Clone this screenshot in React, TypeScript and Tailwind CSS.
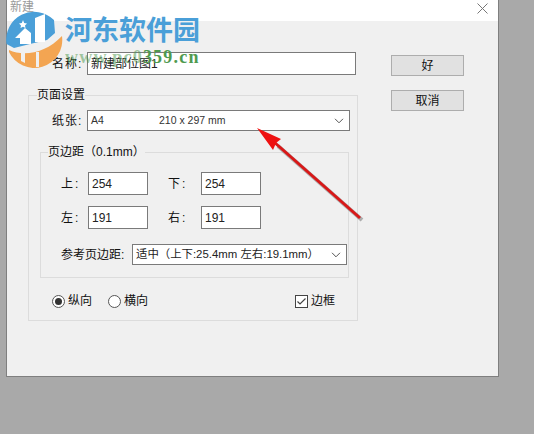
const cjk = "font-['Liberation_Sans','Noto_Sans_CJK_SC',sans-serif]";

function TextBox({ value, className = "" }: { value: string; className?: string }) {
  return (
    <div className={`flex h-[23px] items-center border border-[#7a7a7a] bg-white px-[3px] text-[12px] text-[#222] ${className}`}>
      {value}
    </div>
  );
}

function Chevron() {
  return (
    <svg width="10" height="6" viewBox="0 0 10 6" fill="none" stroke="#555" strokeWidth="1">
      <path d="M1 .8 5 4.8 9 .8" />
    </svg>
  );
}

function MarginField({ label, value, labelWidth }: { label: string; value: string; labelWidth: string }) {
  return (
    <div className="flex items-center">
      <span className={`${labelWidth} text-[12px] tracking-[2px]`}>{label}</span>
      <TextBox value={value} className="w-[60px]" />
    </div>
  );
}

function Logo() {
  return (
    <div className="pointer-events-none absolute left-0 top-0 z-10 flex">
      <svg width="65" height="72" viewBox="0 0 65 72" className="shrink-0">
        {/* blue dome */}
        <path d="M6.500 44A28 28 0 0 1 54 20L55 33 47 40 30 44 14 48Z" fill="#4a9fd8" />
        {/* white star, house and bar */}
        <path d="M23 20 24.200 23 27 23.500 25 25.500 25.500 28 23 26.700 20.500 28 21 25.500 19 23.500 21.800 23Z" fill="#fff" />
        <path d="M15 38 25 28 31 33V44H20V38Z" fill="#fff" />
        <path d="M35 18 45 14V42H35Z" fill="#fff" />
        {/* orange crescent */}
        <path d="M9 50C24 57 46 53 62 36A28 28 0 0 1 9 52Z" fill="#f3a552" />
        <path d="M21 51H25V63L21 61ZM36 52H39V67H36Z" fill="#f0f0f0" />
      </svg>
      <div className="flex flex-col">
        <span className="mt-[13px] text-[27px] leading-[32px] font-bold text-[#4a9fd8] font-['Noto_Sans_CJK_SC',sans-serif]">
          河东软件园
        </span>
        <span className="mt-[3px] text-[18px] leading-[18px] font-bold tracking-[1.2px] whitespace-nowrap text-[#4f9a4f] font-['Liberation_Serif',serif]">
          <span className="opacity-50">www.pc0</span>
          <span>359.cn</span>
        </span>
      </div>
    </div>
  );
}

function Arrow() {
  return (
    <svg className="pointer-events-none absolute left-[250px] top-[120px]" width="120" height="105" viewBox="0 0 120 105">
      <path d="M112 100 28 26" stroke="#777" strokeOpacity=".55" strokeWidth="4" fill="none" />
      <path d="M110 98 24 22" stroke="#d81818" strokeWidth="3" fill="none" />
      <path d="M7 8 31 19 26 23 23 30Z" fill="#ee1111" />
    </svg>
  );
}

export default function App() {
  return (
    <div className={`relative h-[434px] w-[534px] overflow-hidden bg-[#a9a9a9] pl-[6px] ${cjk}`}>
      <div className="flex h-[377px] w-[493px] flex-col border-r border-b border-l border-[#7f7f7f] bg-[#f0f0f0] text-[#111]">
        <div className="flex h-[21px] shrink-0 items-start justify-between bg-white pl-[3px] pr-[10px]">
          <span className="text-[12px] leading-[14px] text-[#999]">新建</span>
          <svg width="11" height="11" viewBox="0 0 11 11" stroke="#777" strokeWidth="1" className="mt-[3px]">
            <path d="M.5.5 10.5 10.5M10.5.5.5 10.5" />
          </svg>
        </div>

        <div className="flex pl-[21px] pt-[31px]">
          <div className="w-[330px]">
            <div className="flex items-center">
              <span className="ml-[24px] w-[35px] text-[12px] tracking-[1px]">名称:</span>
              <TextBox value="新建部位图1" className="w-[269px]" />
            </div>

            <fieldset className="mt-[13px] h-[233px] w-[330px] min-w-0 border border-[#dcdcdc]">
              <legend className="ml-[8px] text-[12px] leading-[14px]">页面设置</legend>
              <div className="mt-[8px] flex items-center pl-[23px]">
                <span className="w-[35px] text-[12px] tracking-[1px]">纸张:</span>
                <div className="flex h-[21px] w-[263px] items-center border border-[#7a7a7a] bg-white pl-[3px] pr-[5px] text-[10.5px] text-[#333]">
                  <span className="w-[68px]">A4</span>
                  <span>210 x 297 mm</span>
                  <span className="ml-auto"><Chevron /></span>
                </div>
              </div>

              <fieldset className="ml-[11px] mt-[14px] h-[133px] w-[309px] min-w-0 border border-[#dcdcdc]">
                <legend className="ml-[7px] text-[12px] leading-[14px]">页边距（0.1mm）</legend>
                <div className="mt-[13px] flex flex-col gap-[11px] pl-[20px]">
                  <div className="flex gap-[20px]">
                    <MarginField label="上:" value="254" labelWidth="w-[27px]" />
                    <MarginField label="下:" value="254" labelWidth="w-[33px]" />
                  </div>
                  <div className="flex gap-[20px]">
                    <MarginField label="左:" value="191" labelWidth="w-[27px]" />
                    <MarginField label="右:" value="191" labelWidth="w-[33px]" />
                  </div>
                </div>
                <div className="mt-[15px] flex items-center pl-[20px]">
                  <span className="w-[71px] text-[12px]">参考页边距:</span>
                  <div className="flex h-[21px] w-[215px] items-center justify-between border border-[#7a7a7a] bg-white pl-[3px] pr-[5px] text-[11.4px] text-[#222]">
                    <span className="whitespace-nowrap">适中（上下:25.4mm 左右:19.1mm）</span>
                    <Chevron />
                  </div>
                </div>
              </fieldset>

              <div className="mt-[14px] flex items-center pl-[23px] text-[12px]">
                <span className="flex h-[13px] w-[13px] items-center justify-center rounded-full border border-[#555] bg-white">
                  <span className="h-[7px] w-[7px] rounded-full bg-[#333]" />
                </span>
                <span className="ml-[3px]">纵向</span>
                <span className="ml-[16px] h-[13px] w-[13px] rounded-full border border-[#555] bg-white" />
                <span className="ml-[3px]">横向</span>
                <span className="ml-[147px] flex h-[13px] w-[13px] items-center justify-center border border-[#444] bg-white">
                  <svg width="11" height="9" viewBox="0 0 11 9" fill="none" stroke="#444" strokeWidth="1.2">
                    <path d="M1.5 4.5 4 7 9.5 1.5" />
                  </svg>
                </span>
                <span className="ml-[3px]">边框</span>
              </div>
            </fieldset>
          </div>

          <div className="ml-[33px] mt-[3px] flex flex-col gap-[14px]">
            <button className="h-[21px] w-[73px] border border-[#adadad] bg-[#e1e1e1] text-[12px]">好</button>
            <button className="h-[21px] w-[73px] border border-[#adadad] bg-[#e1e1e1] text-[12px]">取消</button>
          </div>
        </div>
      </div>
      <Logo />
      <Arrow />
    </div>
  );
}
